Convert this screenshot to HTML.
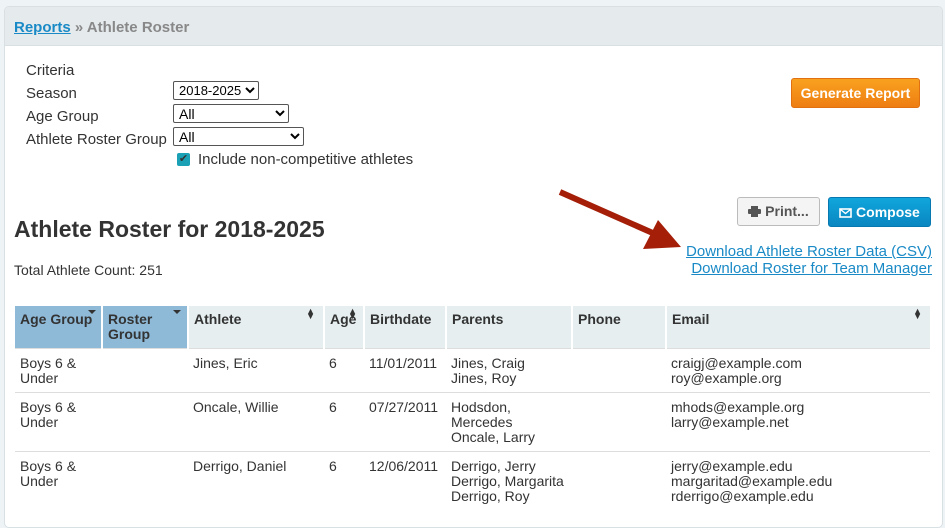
<!DOCTYPE html>
<html><head><style>
body{margin:0;background:#eef3f5;font-family:"Liberation Sans",Arial,sans-serif;font-size:14px;color:#333;width:945px;height:504px;overflow:hidden;position:relative}
.panel{position:absolute;left:4px;top:6px;width:937px;height:520px;background:#fff;border:1px solid #d8e0e4;border-radius:5px;overflow:hidden}
.hd{height:38px;background:#e5eaed;border-bottom:1px solid #d8e0e4}
.hd span{position:absolute;left:9px;top:12px;font-weight:bold;font-size:15px;color:#888}
.hd a{color:#1a8ac6;text-decoration:underline}
.abs{position:absolute}
select{font-family:"Liberation Sans",Arial,sans-serif;font-size:14px;height:19px;border:1px solid #555;border-radius:2px;background:#fff;padding:0 1px;color:#000}
.btn{position:absolute;border-radius:3px;font-weight:bold;font-size:14px;text-align:center}
a.l{color:#1a8ac6;text-decoration:underline}
table{position:absolute;left:15px;top:306px;border-collapse:collapse;width:915px}
th{text-align:left;vertical-align:top;background:#e6eef0;font-weight:bold;padding:6px 5px;border-left:2px solid #fff;height:27px;line-height:15px;position:relative}
th.s{background:#8ebad8}
td{vertical-align:top;padding:7px 5px 6px;line-height:15px;border-top:1px solid #ddd}
.dn{position:absolute;right:5px;top:4px;width:0;height:0;border-left:4px solid transparent;border-right:4px solid transparent;border-top:4px solid #333}
.ud{position:absolute;right:8px;top:3px;font-size:9px;line-height:5px}
</style></head><body>
<div class="panel"><div class="hd"><span><a>Reports</a> » Athlete Roster</span></div></div>
<div class="abs" style="left:26px;top:59px;line-height:23px;font-size:15px">Criteria<br>Season<br>Age Group<br>Athlete Roster Group</div>
<select class="abs" style="left:173px;top:81px;width:86px;font-size:13px"><option>2018-2025</option></select>
<select class="abs" style="left:173px;top:104px;width:116px"><option>All</option></select>
<select class="abs" style="left:173px;top:127px;width:131px"><option>All</option></select>
<div class="abs" style="left:177px;top:153px;width:13px;height:13px;background:#1aa1b5;border-radius:2px;color:#333;font-size:11px;line-height:13px;text-align:center">✔</div>
<div class="abs" style="left:198px;top:151px;font-size:15px">Include non-competitive athletes</div>
<div class="btn" style="left:791px;top:78px;width:127px;height:28px;line-height:28px;background:linear-gradient(#f9a21f,#ee7d12);border:1px solid #e07010;color:#fff">Generate Report</div>
<div class="abs" style="left:14px;top:216px;font-size:23px;font-weight:bold;color:#333">Athlete Roster for 2018-2025</div>
<div class="abs" style="left:14px;top:262px">Total Athlete Count: 251</div>
<div class="btn" style="left:737px;top:197px;width:81px;height:27px;line-height:27px;background:#f4f4f4;border:1px solid #bbb;color:#555"><svg width="13" height="11" style="vertical-align:-1px"><rect x="3" y="0" width="7" height="3" fill="#555"/><rect x="0" y="3" width="13" height="5" rx="1" fill="#555"/><rect x="3" y="7" width="7" height="4" fill="#555"/></svg> Print...</div>
<div class="btn" style="left:828px;top:197px;width:101px;height:28px;line-height:28px;background:linear-gradient(#10a6dd,#0a86c0);border:1px solid #0878b0;color:#fff"><svg width="13" height="10" style="vertical-align:-1px"><rect x="1" y="1" width="11" height="8" fill="none" stroke="#fff" stroke-width="1.6"/><polyline points="1,1 6.5,5.5 12,1" fill="none" stroke="#fff" stroke-width="1.4"/></svg> Compose</div>
<div class="abs" style="right:13px;top:243px;text-align:right;line-height:17px;font-size:15px"><a class="l">Download Athlete Roster Data (CSV)</a><br><a class="l">Download Roster for Team Manager</a></div>
<svg class="abs" style="left:555px;top:185px" width="130" height="70"><line x1="5" y1="7" x2="100" y2="49" stroke="#a41e08" stroke-width="6"/><polygon points="126,62 88,64 103,35" fill="#a41e08"/></svg>
<table>
<tr><th class="s" style="width:76px;border-left:none">Age Group<span class="dn"></span></th><th class="s" style="width:74px">Roster Group<span class="dn" style="right:6px"></span></th><th style="width:124px">Athlete<span class="ud">▲<br>▼</span></th><th style="width:28px">Age<span class="ud" style="right:6px">▲<br>▼</span></th><th style="width:70px">Birthdate</th><th style="width:114px">Parents</th><th style="width:82px">Phone</th><th>Email<span class="ud">▲<br>▼</span></th></tr>
<tr><td>Boys 6 &amp;<br>Under</td><td></td><td>Jines, Eric</td><td>6</td><td>11/01/2011</td><td>Jines, Craig<br>Jines, Roy</td><td></td><td>craigj@example.com<br>roy@example.org</td></tr>
<tr><td>Boys 6 &amp;<br>Under</td><td></td><td>Oncale, Willie</td><td>6</td><td>07/27/2011</td><td>Hodsdon,<br>Mercedes<br>Oncale, Larry</td><td></td><td>mhods@example.org<br>larry@example.net</td></tr>
<tr><td>Boys 6 &amp;<br>Under</td><td></td><td>Derrigo, Daniel</td><td>6</td><td>12/06/2011</td><td>Derrigo, Jerry<br>Derrigo, Margarita<br>Derrigo, Roy</td><td></td><td>jerry@example.edu<br>margaritad@example.edu<br>rderrigo@example.edu</td></tr>
</table>
</body></html>
